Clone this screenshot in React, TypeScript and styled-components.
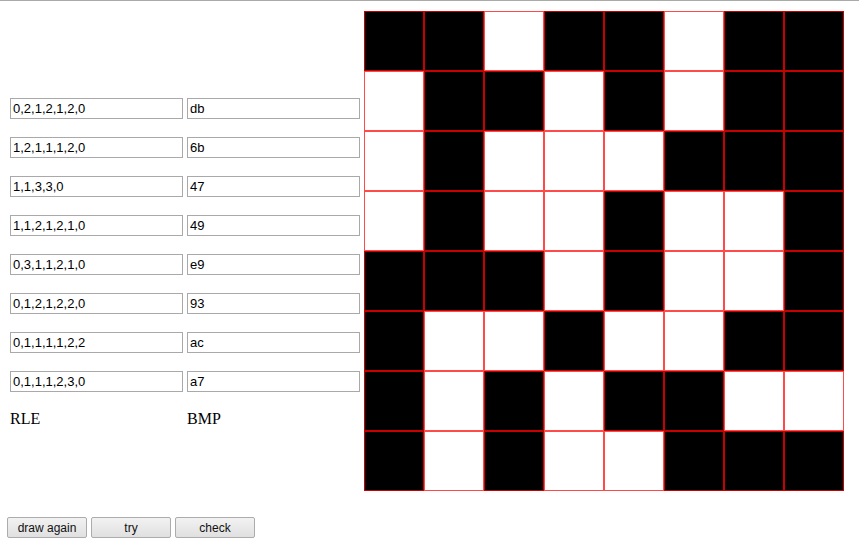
import React from "react";
import styled, { createGlobalStyle } from "styled-components";

const Global = createGlobalStyle`
  html, body { margin: 0; padding: 0; background: #fff; }
  body { font-family: "Liberation Serif", "Times New Roman", serif; font-size: 16px; color: #000; }
`;

const TopRule = styled.div`
  height: 1px;
  background: #aaaaaa;
`;

const Main = styled.div`
  display: flex;
  align-items: flex-start;
`;

const Left = styled.div`
  display: grid;
  grid-template-columns: 173px 173px;
  column-gap: 4px;
  row-gap: 18px;
  padding: 97px 0 0 10px;
  width: 350px;
`;

const Field = styled.input`
  box-sizing: border-box;
  width: 173px;
  height: 21px;
  margin: 0;
  padding: 0 2px;
  border: 1px solid #a9a9a9;
  font-family: "Liberation Sans", Arial, sans-serif;
  font-size: 13px;
  color: #000;
  background: #fff;
  outline: none;
`;

const Label = styled.div`
  font-family: "Liberation Serif", "Times New Roman", serif;
  font-size: 16px;
  line-height: 18px;
`;

const Board = styled.div`
  display: grid;
  grid-template-columns: repeat(8, 60px);
  grid-auto-rows: 60px;
  margin: 10px 0 0 4px;
`;

const Cell = styled.div<{ $on: boolean }>`
  box-sizing: border-box;
  border: 1px solid ${(p) => (p.$on ? "#c80000" : "#ff4a4a")};
  background: ${(p) => (p.$on ? "#000" : "#fff")};
`;

const Buttons = styled.div`
  display: flex;
  gap: 4px;
  padding: 26px 0 0 7px;
`;

const Btn = styled.button`
  box-sizing: border-box;
  width: 80px;
  height: 21px;
  margin: 0;
  padding: 0;
  border: 1px solid #acacac;
  border-radius: 2px;
  background: linear-gradient(#f2f2f2, #e0e0e0);
  font-family: "Liberation Sans", Arial, sans-serif;
  font-size: 12px;
  color: #111;
`;

const hex = ["db", "6b", "47", "49", "e9", "93", "ac", "a7"];

const rle = (h: string) => {
  const bits = parseInt(h, 16).toString(2).padStart(8, "0");
  const runs: number[] = [];
  let cur = "0";
  let n = 0;
  for (const b of bits) {
    if (b === cur) n++;
    else {
      runs.push(n);
      cur = b;
      n = 1;
    }
  }
  runs.push(n);
  if (cur === "1") runs.push(0);
  return runs.join(",");
};

export default function App() {
  return (
    <>
      <Global />
      <TopRule />
      <Main>
        <Left>
          {hex.map((h) => (
            <React.Fragment key={h}>
              <Field defaultValue={rle(h)} />
              <Field defaultValue={h} />
            </React.Fragment>
          ))}
          <Label>RLE</Label>
          <Label>BMP</Label>
        </Left>
        <Board>
          {hex.flatMap((h, r) =>
            parseInt(h, 16)
              .toString(2)
              .padStart(8, "0")
              .split("")
              .map((b, c) => <Cell key={`${r}-${c}`} $on={b === "1"} />)
          )}
        </Board>
      </Main>
      <Buttons>
        <Btn>draw again</Btn>
        <Btn>try</Btn>
        <Btn>check</Btn>
      </Buttons>
    </>
  );
}
